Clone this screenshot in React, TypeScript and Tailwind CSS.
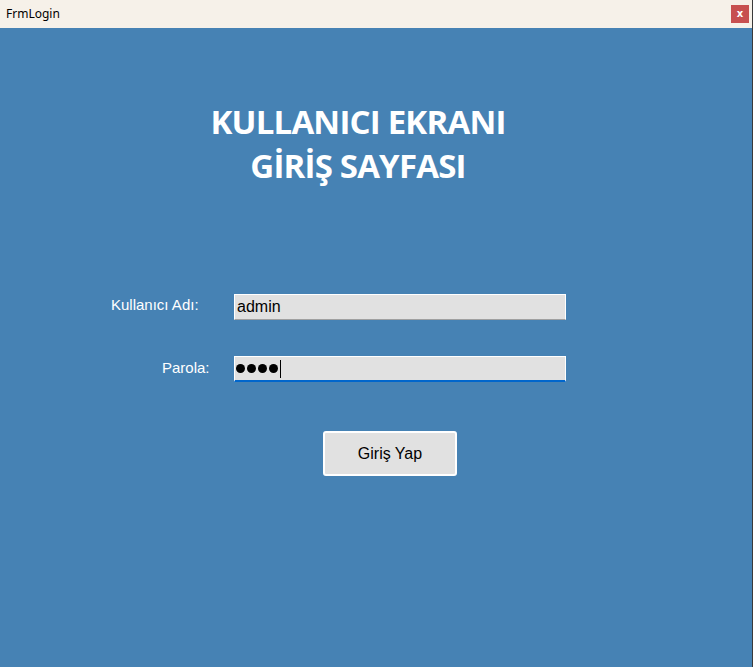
import React from 'react';

// ----------------------------------------------------------------------

const App: React.FC = () => {
  return (
    <div className="flex h-[667px] w-[753px] flex-col overflow-hidden border-r border-[#3a3a3a] bg-[#4682b4]">
      {/* title bar */}
      <div className="flex h-[28px] shrink-0 items-center justify-between bg-[#f6f1e9] pl-[6px] pr-[3px]">
        <span className="text-[12px] text-black" style={{ fontFamily: '"Noto Sans", sans-serif' }}>
          FrmLogin
        </span>
        <div className="flex h-[18px] w-[18px] items-center justify-center bg-[#c75050] text-[10px] font-bold leading-none text-white" style={{ fontFamily: '"DejaVu Sans", sans-serif' }}>
          x
        </div>
      </div>

      {/* form */}
      <div className="flex flex-1 flex-col">
        <div
          className="ml-[158px] mt-[72px] w-[400px] whitespace-nowrap text-center text-[33px] font-bold leading-[44px] tracking-[-0.8px] text-white"
          style={{ fontFamily: '"Open Sans", sans-serif' }}
        >
          <p>KULLANICI EKRANI</p>
          <p>GİRİŞ SAYFASI</p>
        </div>

        <div className="mt-[106px] flex flex-col gap-[36px]" style={{ fontFamily: '"Liberation Sans", Arial, sans-serif' }}>
          <div className="flex items-start">
            <label className="ml-[111px] w-[123px] text-[15px] text-white">Kullanıcı Adı:</label>
            <div className="flex h-[26px] w-[332px] items-center border border-white border-b-[#a0a0a0] bg-[#e1e1e1] px-[2px] text-[16px] text-black">admin</div>
          </div>
          <div className="flex items-start">
            <label className="ml-[162px] mt-[1px] w-[72px] text-[15px] text-white">Parola:</label>
            <div className="flex h-[26px] w-[332px] items-center border border-white border-b-2 border-b-[#0066cc] bg-[#e1e1e1] px-[1px] text-black">
              <span className="flex gap-[2px]">
                <span className="h-[9px] w-[9px] rounded-full bg-black" />
                <span className="h-[9px] w-[9px] rounded-full bg-black" />
                <span className="h-[9px] w-[9px] rounded-full bg-black" />
                <span className="h-[9px] w-[9px] rounded-full bg-black" />
              </span>
              <span className="ml-[2px] h-[18px] w-px bg-black" />
            </div>
          </div>
        </div>

        <button
          className="ml-[323px] mt-[49px] flex h-[45px] w-[134px] items-center justify-center rounded-[3px] border-2 border-white bg-[#e1e1e1] text-[16px] text-black"
          style={{ fontFamily: '"Liberation Sans", Arial, sans-serif' }}
        >
          Giriş Yap
        </button>
      </div>
    </div>
  );
};

export default App;
